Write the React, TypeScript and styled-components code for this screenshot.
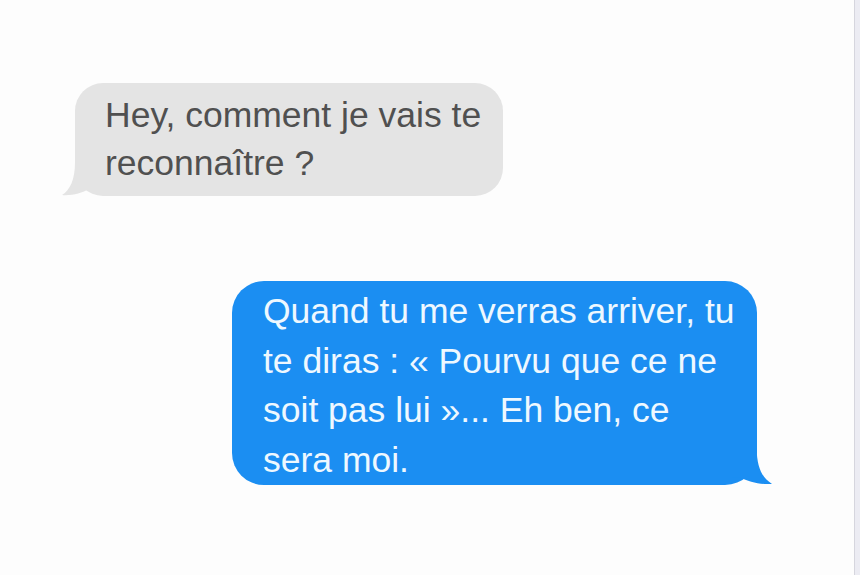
import React from "react";
import styled, { createGlobalStyle } from "styled-components";

const GlobalStyle = createGlobalStyle`
  html, body { margin: 0; padding: 0; background: #fdfdfd; }
  body { font-family: "Liberation Sans", Arial, sans-serif; }
`;

const Page = styled.div`
  display: grid;
  grid-template-columns: 1fr 6px;
  width: 860px;
  height: 575px;
  overflow: hidden;
  background: #fdfdfd;
`;

const Thread = styled.div`
  display: flex;
  flex-direction: column;
  padding-top: 83px;
`;

const EdgeStrip = styled.div`
  background: #ececf3;
  border-left: 1px solid #d6d6de;
`;

type Side = "in" | "out";

const Bubble = styled.div<{ $side: Side; $width: number }>`
  position: relative;
  box-sizing: border-box;
  width: ${(p) => p.$width}px;
  border-radius: ${(p) => (p.$side === "in" ? "28px" : "32px")};
  font-size: 35.5px;
  background: ${(p) => (p.$side === "in" ? "#e4e4e4" : "#1b8ef2")};
  color: ${(p) => (p.$side === "in" ? "#505050" : "#eef8ff")};
  line-height: ${(p) => (p.$side === "in" ? "48px" : "49.5px")};
  padding: ${(p) => (p.$side === "in" ? "8px 18px 9px 30px" : "6px 18px 0 31px")};
  margin-left: ${(p) => (p.$side === "in" ? "75px" : "232px")};
  margin-top: ${(p) => (p.$side === "in" ? "0" : "85px")};
`;

const Tail = styled.svg<{ $side: Side }>`
  position: absolute;
  bottom: 0;
  ${(p) =>
    p.$side === "in"
      ? "left: -13px; width: 34px; height: 34px;"
      : "right: -15px; width: 40px; height: 37px; transform: scaleX(-1);"}
`;

function BubbleTail({ side, color }: { side: Side; color: string }) {
  return (
    <Tail $side={side} viewBox="0 0 34 34" preserveAspectRatio="none">
      <path
        d="M13 0 C13 18 8 28 0 33 C9 34 20 31 27 27 L34 27 L34 0 Z"
        fill={color}
      />
    </Tail>
  );
}

export default function App() {
  return (
    <>
      <GlobalStyle />
      <Page>
        <Thread>
          <Bubble $side="in" $width={428}>
            Hey, comment je vais te reconnaître ?
            <BubbleTail side="in" color="#e4e4e4" />
          </Bubble>
          <Bubble $side="out" $width={525}>
            Quand tu me verras arriver, tu te diras : « Pourvu que ce ne soit pas lui »... Eh ben, ce sera moi.
            <BubbleTail side="out" color="#1b8ef2" />
          </Bubble>
        </Thread>
        <EdgeStrip />
      </Page>
    </>
  );
}
